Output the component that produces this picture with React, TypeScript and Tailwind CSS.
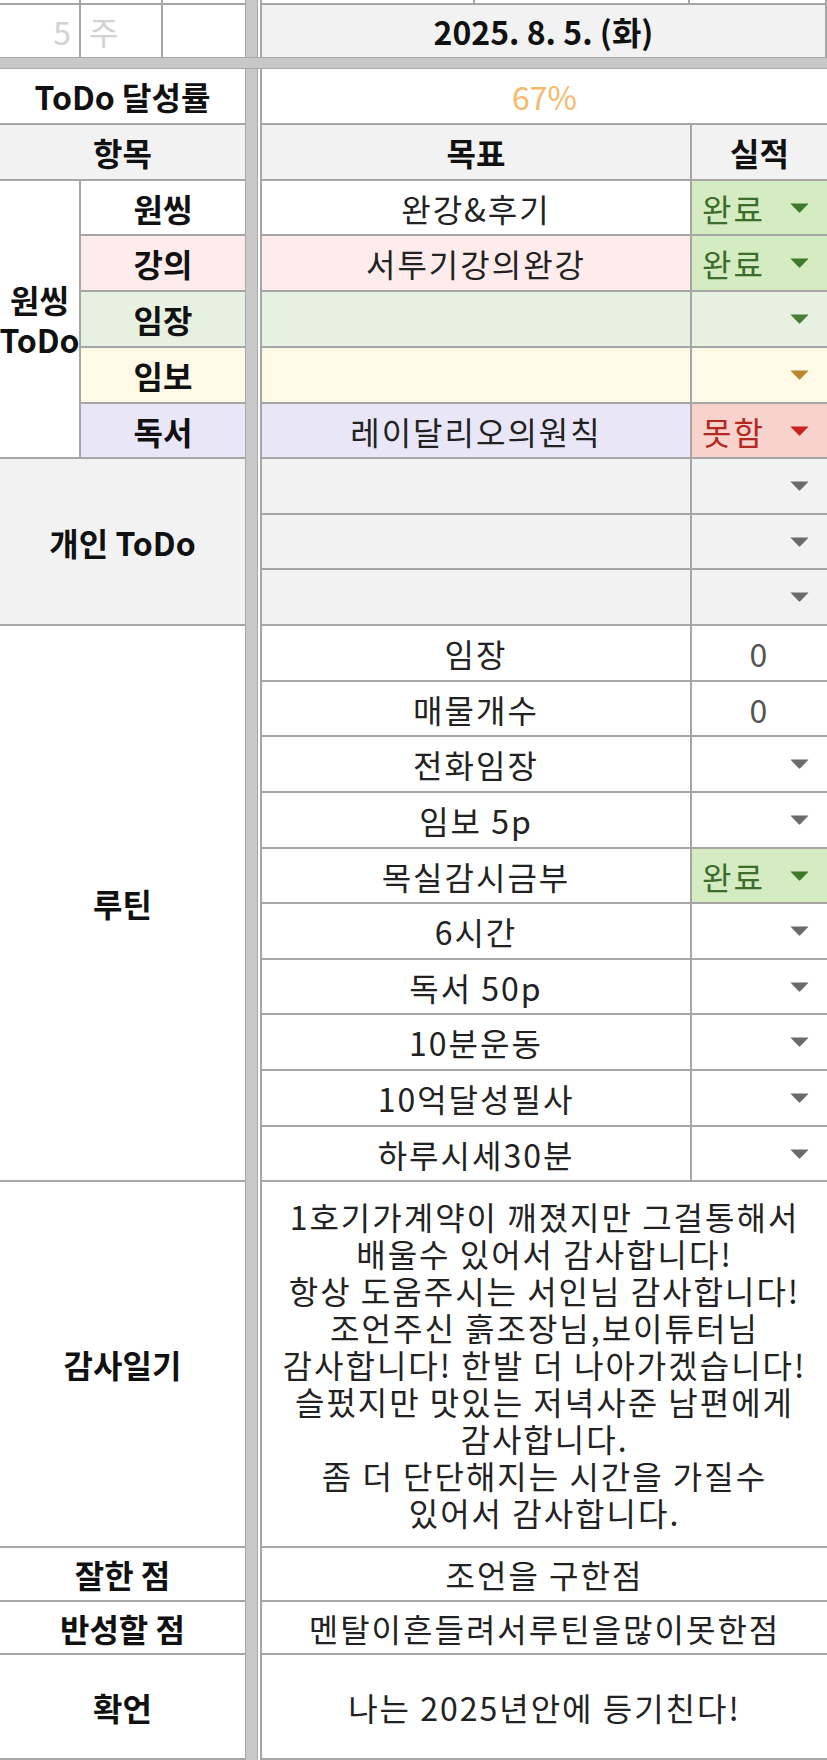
import { type FC, type ReactNode } from "react";

// row tracks shared by the left and right panes so the lines stay aligned
const ROWS =
  "grid-rows-[54px_54px_53px_54px_54px_54px_53px_54px_53px_54px_54px_53px_54px_54px_53px_54px_53px_54px_54px_53px_364px_52px_51px_103px]";

const Cell: FC<{ className?: string; children?: ReactNode }> = ({ className = "", children }) => {
  return (
    <div className={`flex items-center justify-center text-center whitespace-nowrap ${className}`}>
      {children}
    </div>
  );
};

const Arrow: FC<{ color: string }> = ({ color }) => {
  return (
    <svg width="19" height="10" viewBox="0 0 19 10" className="shrink-0">
      <path d="M1 0.5 H18 Q18.6 0.5 18.2 1.1 L10.2 9.3 Q9.5 10 8.8 9.3 L0.8 1.1 Q0.4 0.5 1 0.5 Z" fill={color} />
    </svg>
  );
};

const Status: FC<{ bg: string; text?: string; textColor?: string; arrow: string }> = ({
  bg,
  text,
  textColor = "",
  arrow,
}) => {
  return (
    <div className={`flex items-center pl-[10px] pr-[18px] ${text ? "justify-between" : "justify-end"} ${bg}`}>
      {text && <span className={textColor}>{text}</span>}
      <Arrow color={arrow} />
    </div>
  );
};

const Separator = () => {
  return (
    <>
      <div className="w-[13px] shrink-0 border-x border-[#a9a9a9] bg-[#c8c8c8]" />
      <div className="w-[2px] shrink-0 bg-white" />
    </>
  );
};

const routines: { goal: string; result: "zero" | "done" | "empty" }[] = [
  { goal: "임장", result: "zero" },
  { goal: "매물개수", result: "zero" },
  { goal: "전화임장", result: "empty" },
  { goal: "임보 5p", result: "empty" },
  { goal: "목실감시금부", result: "done" },
  { goal: "6시간", result: "empty" },
  { goal: "독서 50p", result: "empty" },
  { goal: "10분운동", result: "empty" },
  { goal: "10억달성필사", result: "empty" },
  { goal: "하루시세30분", result: "empty" },
];

const gratitude = [
  "1호기가계약이 깨졌지만 그걸통해서",
  "배울수 있어서 감사합니다!",
  "항상 도움주시는 서인님 감사합니다!",
  "조언주신 흙조장님,보이튜터님",
  "감사합니다! 한발 더 나아가겠습니다!",
  "슬펐지만 맛있는 저녁사준 남편에게",
  "감사합니다.",
  "좀 더 단단해지는 시간을 가질수",
  "있어서 감사합니다.",
];

const App = () => {
  return (
    <div className="h-[1760px] w-[827px] overflow-hidden bg-white font-['Noto_Sans_CJK_KR','Noto_Sans',sans-serif] text-[32px] text-[#222]">
      {/* week / date row */}
      <div className="flex">
        <div className="grid w-[245px] grid-cols-[79px_80px_82px] grid-rows-[3px_52px] gap-[2px] bg-[#a6a6a6]">
          <div className="bg-white" />
          <div className="bg-white" />
          <div className="bg-white" />
          <div className="flex items-center justify-end bg-white pr-[8px] text-[#d2d2d2]">5</div>
          <div className="flex items-center bg-white pl-[8px] text-[#d2d2d2]">주</div>
          <div className="bg-white" />
        </div>
        <Separator />
        <div className="grid w-[567px] grid-cols-[211px_213px_135px] grid-rows-[3px_52px] gap-[2px] bg-[#a6a6a6] pl-[2px]">
          <div className="bg-white" />
          <div className="bg-white" />
          <div className="bg-white" />
          <Cell className="col-span-3 bg-[#f2f2f2] font-bold text-[#111]">2025. 8. 5. (화)</Cell>
        </div>
      </div>

      <div className="h-[12px] border-y border-[#a9a9a9] bg-[#c8c8c8]" />

      <div className="flex">
        {/* left pane */}
        <div className={`grid w-[245px] grid-cols-[79px_164px] gap-[2px] bg-[#a6a6a6] pb-[2px] ${ROWS}`}>
          <Cell className="col-span-2 bg-white font-bold text-[#111]">ToDo 달성률</Cell>
          <Cell className="col-span-2 bg-[#f2f2f2] font-bold text-[#111]">항목</Cell>
          <div className="row-span-5 flex flex-col items-center justify-center bg-white font-bold leading-[40px] text-[#111]">
            <span>원씽</span>
            <span className="whitespace-nowrap">ToDo</span>
          </div>
          <Cell className="bg-white font-bold text-[#111]">원씽</Cell>
          <Cell className="bg-[#fdeceb] font-bold text-[#111]">강의</Cell>
          <Cell className="bg-[#e7f1e2] font-bold text-[#111]">임장</Cell>
          <Cell className="bg-[#fffae8] font-bold text-[#111]">임보</Cell>
          <Cell className="bg-[#e8e6f7] font-bold text-[#111]">독서</Cell>
          <Cell className="col-span-2 row-span-3 bg-[#f2f2f2] font-bold text-[#111]">개인 ToDo</Cell>
          <Cell className="col-span-2 row-span-10 bg-white font-bold text-[#111]">루틴</Cell>
          <Cell className="col-span-2 bg-white font-bold text-[#111]">감사일기</Cell>
          <Cell className="col-span-2 bg-white font-bold text-[#111]">잘한 점</Cell>
          <Cell className="col-span-2 bg-white font-bold text-[#111]">반성할 점</Cell>
          <Cell className="col-span-2 bg-white font-bold text-[#111]">확언</Cell>
        </div>

        <Separator />

        {/* right pane */}
        <div
          className={`grid w-[567px] grid-cols-[428px_135px] gap-[2px] bg-[#a6a6a6] pb-[2px] pl-[2px] tracking-[2px] ${ROWS}`}
        >
          <Cell className="col-span-2 bg-white tracking-normal text-[#f6b96b]">67%</Cell>
          <Cell className="bg-[#f2f2f2] font-bold tracking-normal text-[#111]">목표</Cell>
          <Cell className="bg-[#f2f2f2] font-bold tracking-normal text-[#111]">실적</Cell>

          <Cell className="bg-white">완강&amp;후기</Cell>
          <Status bg="bg-[#d5ebc1]" text="완료" textColor="text-[#3b6d2b]" arrow="#3d7a2a" />
          <Cell className="bg-[#fdeceb]">서투기강의완강</Cell>
          <Status bg="bg-[#d5ebc1]" text="완료" textColor="text-[#3b6d2b]" arrow="#3d7a2a" />
          <Cell className="bg-[#e7f1e2]" />
          <Status bg="bg-[#e7f1e2]" arrow="#4a7d36" />
          <Cell className="bg-[#fffae8]" />
          <Status bg="bg-[#fffae8]" arrow="#b8862e" />
          <Cell className="bg-[#e8e6f7]">레이달리오의원칙</Cell>
          <Status bg="bg-[#f8d3ce]" text="못함" textColor="text-[#b3281f]" arrow="#c8231c" />

          {[0, 1, 2].map((i) => (
            <div key={i} className="contents">
              <Cell className="bg-[#f2f2f2]" />
              <Status bg="bg-[#f2f2f2]" arrow="#6b6b6b" />
            </div>
          ))}

          {routines.map((r) => (
            <div key={r.goal} className="contents">
              <Cell className="bg-white">{r.goal}</Cell>
              {r.result === "zero" && <Cell className="bg-white text-[#555]">0</Cell>}
              {r.result === "done" && (
                <Status bg="bg-[#d5ebc1]" text="완료" textColor="text-[#3b6d2b]" arrow="#3d7a2a" />
              )}
              {r.result === "empty" && <Status bg="bg-white" arrow="#6b6b6b" />}
            </div>
          ))}

          <div className="col-span-2 flex flex-col items-center justify-center bg-white leading-[37px]">
            {gratitude.map((line) => (
              <span key={line} className="whitespace-nowrap">
                {line}
              </span>
            ))}
          </div>
          <Cell className="col-span-2 bg-white">조언을 구한점</Cell>
          <Cell className="col-span-2 bg-white">멘탈이흔들려서루틴을많이못한점</Cell>
          <Cell className="col-span-2 bg-white">나는 2025년안에 등기친다!</Cell>
        </div>
      </div>
    </div>
  );
};

export default App;
